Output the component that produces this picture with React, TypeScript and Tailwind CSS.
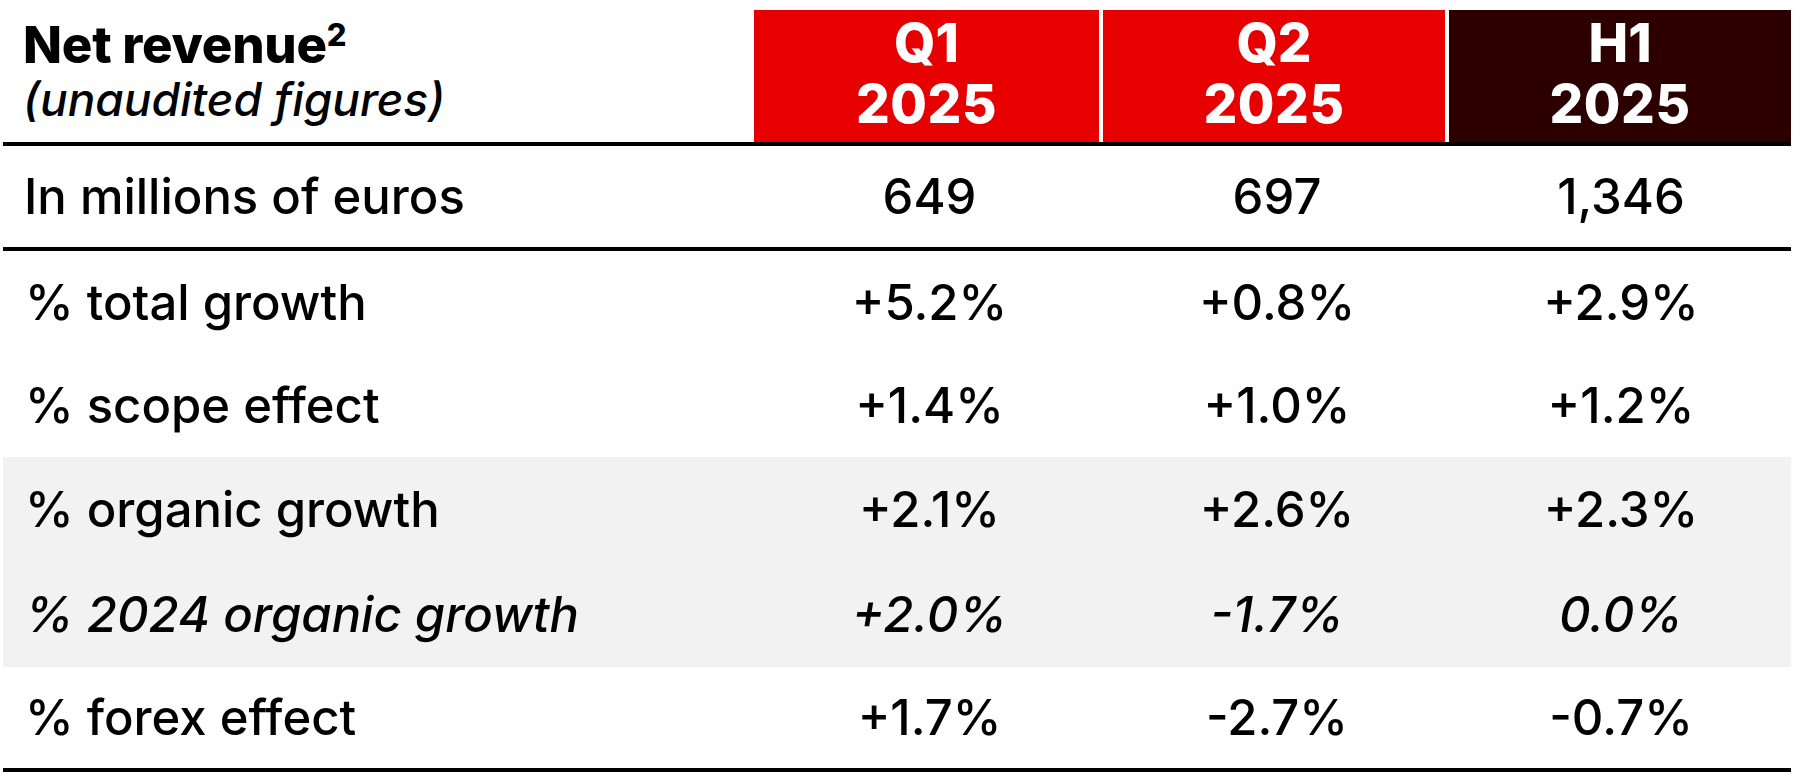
const cols = ["Q1", "Q2", "H1"];

type Row = {
  label: string;
  values: string[];
  height: string;
  shaded?: boolean;
  italic?: boolean;
};

const rows: Row[] = [
  { label: "% total growth", values: ["+5.2%", "+0.8%", "+2.9%"], height: "h-[102px]" },
  { label: "% scope effect", values: ["+1.4%", "+1.0%", "+1.2%"], height: "h-[104px]" },
  { label: "% organic growth", values: ["+2.1%", "+2.6%", "+2.3%"], height: "h-[105px]", shaded: true },
  { label: "% 2024 organic growth", values: ["+2.0%", "-1.7%", "0.0%"], height: "h-[105px]", shaded: true, italic: true },
  { label: "% forex effect", values: ["+1.7%", "-2.7%", "-0.7%"], height: "h-[101px]" },
];

function HeaderCell({ period, dark, gap }: { period: string; dark?: boolean; gap?: boolean }) {
  return (
    <div
      className={`flex flex-col items-center pt-[3px] text-[53px] font-extrabold leading-[61px] text-white ${
        dark ? "bg-[#2d0000]" : "bg-[#e60000]"
      } ${gap ? "border-r-4 border-white" : ""}`}
    >
      <span>{period}</span>
      <span className="tracking-[0.01em]">2025</span>
    </div>
  );
}

export default function App() {
  return (
    <div className="min-h-screen bg-white pl-[3px] pt-[10px] text-black" style={{ fontFamily: "Inter, 'Liberation Sans', sans-serif" }}>
      <div className="w-[1788px]">
        {/* header */}
        <div className="grid h-[132px] grid-cols-[751px_349px_346px_342px]">
          <div className="flex flex-col pl-[20px] pt-[7px] leading-[55px]">
            <span className="text-[51px] font-extrabold tracking-[-0.005em]">
              Net revenue<sup className="-top-[17px] text-[31px]">2</sup>
            </span>
            <span className="text-[46px] font-medium italic">(unaudited figures)</span>
          </div>
          {cols.map((c, i) => (
            <HeaderCell key={c} period={c} dark={i === 2} gap={i < 2} />
          ))}
        </div>
        <div className="h-[4px] bg-black" />

        <div className="grid h-[101px] grid-cols-[751px_349px_346px_342px] items-center text-[49px] font-medium leading-none">
          <div className="pl-[21px]">In millions of euros</div>
          <div className="pl-[2px] text-center">649</div>
          <div className="pl-[2px] text-center">697</div>
          <div className="pl-[2px] text-center">1,346</div>
        </div>
        <div className="h-[4px] bg-black" />

        {rows.map((r) => (
          <div
            key={r.label}
            className={`grid grid-cols-[751px_349px_346px_342px] items-center text-[49px] font-medium leading-none ${r.height} ${
              r.shaded ? "bg-[#f2f2f2]" : ""
            } ${r.italic ? "italic" : ""}`}
          >
            <div className="pl-[22px]">{r.label}</div>
            {r.values.map((v, i) => (
              <div key={i} className="pl-[2px] text-center">
                {v}
              </div>
            ))}
          </div>
        ))}
        <div className="h-[4px] bg-black" />
      </div>
    </div>
  );
}
